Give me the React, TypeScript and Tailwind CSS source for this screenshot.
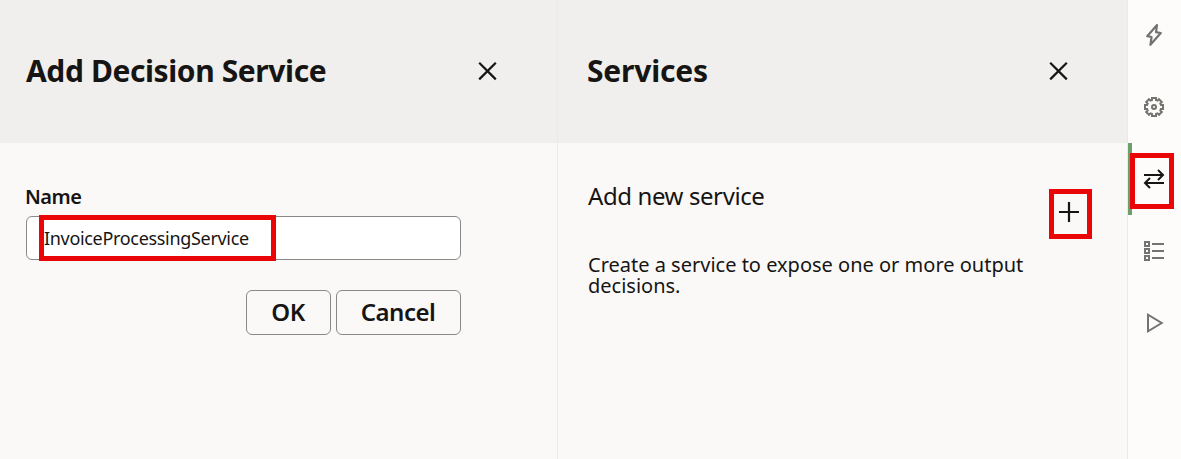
import type { ReactNode } from 'react';

function CloseIcon() {
  return (
    <svg width="24" height="24" viewBox="0 0 24 24" fill="none" stroke="#161513" strokeWidth="2.2">
      <path d="M4.2 2.8 20.8 19.4M20.8 2.8 4.2 19.4" />
    </svg>
  );
}

function BoltIcon() {
  return (
    <svg width="24" height="24" viewBox="0 0 24 24" fill="none" stroke="#75736f" strokeWidth="2.2">
      <path d="M15 2 5.2 13.2l4.4.8-1.2 7.8L18.8 10l-4.8-.8z" strokeLinejoin="round" />
    </svg>
  );
}

function GearIcon() {
  return (
    <svg width="24" height="24" viewBox="0 0 24 24" fill="none" stroke="#75736f" strokeWidth="2">
      <path d="M10 3h4v2.1l1.5.6L17 4.2 19.8 7l-1.5 1.5.6 1.5H21v4h-2.1l-.6 1.5 1.5 1.5-2.8 2.8-1.5-1.5-1.5.6V21h-4v-2.1l-1.5-.6L7 19.8 4.2 17l1.5-1.5-.6-1.5H3v-4h2.1l.6-1.5L4.2 7 7 4.2l1.5 1.5 1.5-.6z" />
      <circle cx="12" cy="12" r="2" />
    </svg>
  );
}

function SwapIcon() {
  return (
    <svg width="24" height="24" viewBox="0 0 24 24" fill="none" stroke="#161513" strokeWidth="2">
      <path d="M2 8h19M16 3l5 5-5 5M22 16H3M8 11l-5 5 5 5" />
    </svg>
  );
}

function ListIcon() {
  return (
    <svg width="24" height="24" viewBox="0 0 24 24" fill="none" stroke="#75736f" strokeWidth="2">
      <path d="M3 3h4v4H3zM3 10h4v4H3zM3 17h4v4H3zM10 5h12M10 12h12M10 19h12" />
    </svg>
  );
}

function PlayIcon() {
  return (
    <svg width="24" height="24" viewBox="0 0 24 24" fill="none" stroke="#75736f" strokeWidth="2">
      <path d="M6 3.7v16.6L19.7 12z" />
    </svg>
  );
}

function Highlight({ place }: { place: string }) {
  return <span className={`pointer-events-none absolute border-[5px] border-[#ea0606] ${place}`} />;
}

function PanelHeader({ title, pad }: { title: string; pad: string }) {
  return (
    <header className={`flex h-[143px] items-center justify-between bg-[#f0efed] ${pad}`}>
      <h2 className="pb-px text-[30px] leading-10 font-bold whitespace-nowrap">{title}</h2>
      <button aria-label="Close">
        <CloseIcon />
      </button>
    </header>
  );
}

function NavItem({ label, children }: { label: string; children: ReactNode }) {
  return (
    <button aria-label={label} className="flex h-[72px] w-full items-center pb-[2px] pl-[14px]">
      {children}
    </button>
  );
}

export default function App() {
  return (
    <div className="flex h-[459px] w-[1181px] overflow-hidden bg-[#fbf9f8] font-['Noto_Sans',sans-serif] text-[#161513]">
      <section className="w-[558px] border-r border-[#ebeae8]">
        <PanelHeader title="Add Decision Service" pad="pl-[26px] pr-[58px] tracking-[-0.4px]" />
        <div className="flex flex-col pt-[41px] pr-[96px] pl-[26px]">
          <label className="-ml-px h-8 text-[20px] leading-[25px] font-semibold tracking-[-0.5px]">Name</label>
          <div className="relative flex h-11 items-center rounded-md border border-[#8b8987] bg-white pl-[17px]">
            <span className="text-[18px] tracking-[-0.32px] whitespace-nowrap">InvoiceProcessingService</span>
            <Highlight place="-top-[2px] left-[12px] h-[46px] w-[237px]" />
          </div>
          <div className="mt-[30px] flex justify-end gap-[5px] text-[24px] font-semibold tracking-[-0.5px]">
            <button className="h-[45px] w-[85px] rounded-md border border-[#8b8987] pr-px pb-[2px]">OK</button>
            <button className="h-[45px] w-[125px] rounded-md border border-[#8b8987] pr-px pb-[2px]">Cancel</button>
          </div>
        </div>
      </section>
      <section className="w-[570px] border-r border-[#ebeae8]">
        <PanelHeader title="Services" pad="pl-[29px] pr-[57px] tracking-[-0.2px]" />
        <div className="pt-[37px] pr-[35px] pl-[30px]">
          <div className="flex items-start justify-between">
            <h3 className="text-[24px] leading-8 tracking-[-0.4px]">Add new service</h3>
            <button aria-label="Add service" className="relative mt-[9px] flex h-[50px] w-[43px] items-center justify-center">
              <svg className="-mt-[5px] -ml-[4px]" width="20" height="20" viewBox="0 0 20 20" stroke="#161513" strokeWidth="2.2">
                <path d="M10 0v20M0 10h20" />
              </svg>
              <Highlight place="inset-0" />
            </button>
          </div>
          <p className="mt-[15px] w-[450px] text-[20px] leading-[21px]">
            Create a service to expose one or more output decisions.
          </p>
        </div>
      </section>
      <nav className="flex flex-1 flex-col bg-[#fdfcfb]">
        <NavItem label="Actions"><BoltIcon /></NavItem>
        <NavItem label="Settings"><GearIcon /></NavItem>
        <div className="relative">
          <span className="absolute -top-px left-0 h-[72px] w-1 bg-[#6c9f6b]" />
          <NavItem label="Services"><SwapIcon /></NavItem>
          <Highlight place="top-[9px] left-[2px] h-[56px] w-[44px]" />
        </div>
        <NavItem label="Contents"><ListIcon /></NavItem>
        <NavItem label="Run"><PlayIcon /></NavItem>
      </nav>
    </div>
  );
}
